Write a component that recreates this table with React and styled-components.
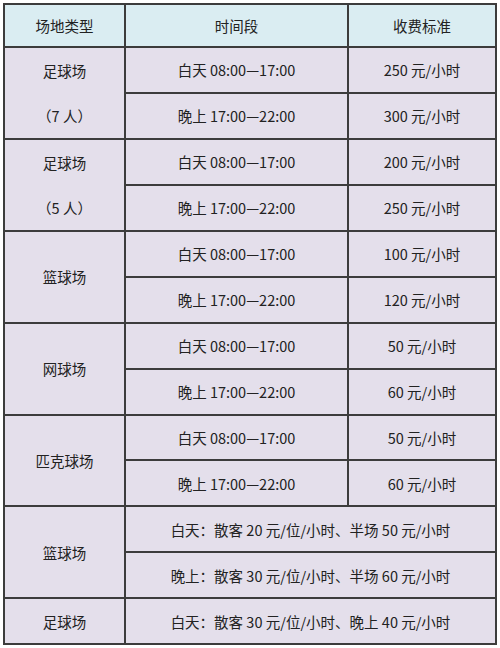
import React from "react";
import styled, { createGlobalStyle } from "styled-components";

const Global = createGlobalStyle`
  html, body { margin: 0; padding: 0; background: #ffffff; }
  body { font-family: "Noto Sans CJK SC", "Noto Sans", sans-serif; }
`;

const Page = styled.div`
  padding: 3px 0 0 3px;
  width: 500px;
  height: 648px;
  box-sizing: border-box;
`;

const Grid = styled.div`
  display: grid;
  grid-template-columns: 119px 221px 146px;
  grid-template-rows: 41px;
  grid-auto-rows: 43.95px;
  gap: 2px;
  padding: 2px;
  width: 494px;
  box-sizing: border-box;
  background: #3c3c3c;
`;

const Cell = styled.div`
  display: flex;
  align-items: center;
  justify-content: center;
  background: ${(p) => (p.$head ? "#daedf2" : "#e4dfeb")};
  color: #222;
  font-size: 14.5px;
  white-space: nowrap;
  grid-row: ${(p) => (p.$rows ? `span ${p.$rows}` : "auto")};
  grid-column: ${(p) => (p.$cols ? `span ${p.$cols}` : "auto")};
`;

const TypeCell = styled(Cell)`
  flex-direction: column;
  align-items: stretch;
`;

const TypeLine = styled.div`
  flex: 1;
  display: flex;
  align-items: center;
  justify-content: center;
`;

const groups = [
  {
    type: ["足球场", "（7 人）"],
    rows: [
      ["白天 08:00—17:00", "250 元/小时"],
      ["晚上 17:00—22:00", "300 元/小时"],
    ],
  },
  {
    type: ["足球场", "（5 人）"],
    rows: [
      ["白天 08:00—17:00", "200 元/小时"],
      ["晚上 17:00—22:00", "250 元/小时"],
    ],
  },
  {
    type: ["篮球场"],
    rows: [
      ["白天 08:00—17:00", "100 元/小时"],
      ["晚上 17:00—22:00", "120 元/小时"],
    ],
  },
  {
    type: ["网球场"],
    rows: [
      ["白天 08:00—17:00", "50 元/小时"],
      ["晚上 17:00—22:00", "60 元/小时"],
    ],
  },
  {
    type: ["匹克球场"],
    rows: [
      ["白天 08:00—17:00", "50 元/小时"],
      ["晚上 17:00—22:00", "60 元/小时"],
    ],
  },
  {
    type: ["篮球场"],
    rows: [
      ["白天：散客 20 元/位/小时、半场 50 元/小时"],
      ["晚上：散客 30 元/位/小时、半场 60 元/小时"],
    ],
  },
  {
    type: ["足球场"],
    rows: [["白天：散客 30 元/位/小时、晚上 40 元/小时"]],
  },
];

export default function App() {
  return (
    <Page>
      <Global />
      <Grid>
        <Cell $head>场地类型</Cell>
        <Cell $head>时间段</Cell>
        <Cell $head>收费标准</Cell>
        {groups.map((g, gi) => (
          <React.Fragment key={gi}>
            <TypeCell $rows={g.rows.length}>
              {g.type.map((t, i) => (
                <TypeLine key={i}>{t}</TypeLine>
              ))}
            </TypeCell>
            {g.rows.map((r, ri) =>
              r.length === 1 ? (
                <Cell key={ri} $cols={2}>
                  {r[0]}
                </Cell>
              ) : (
                <React.Fragment key={ri}>
                  <Cell>{r[0]}</Cell>
                  <Cell>{r[1]}</Cell>
                </React.Fragment>
              )
            )}
          </React.Fragment>
        ))}
      </Grid>
    </Page>
  );
}
